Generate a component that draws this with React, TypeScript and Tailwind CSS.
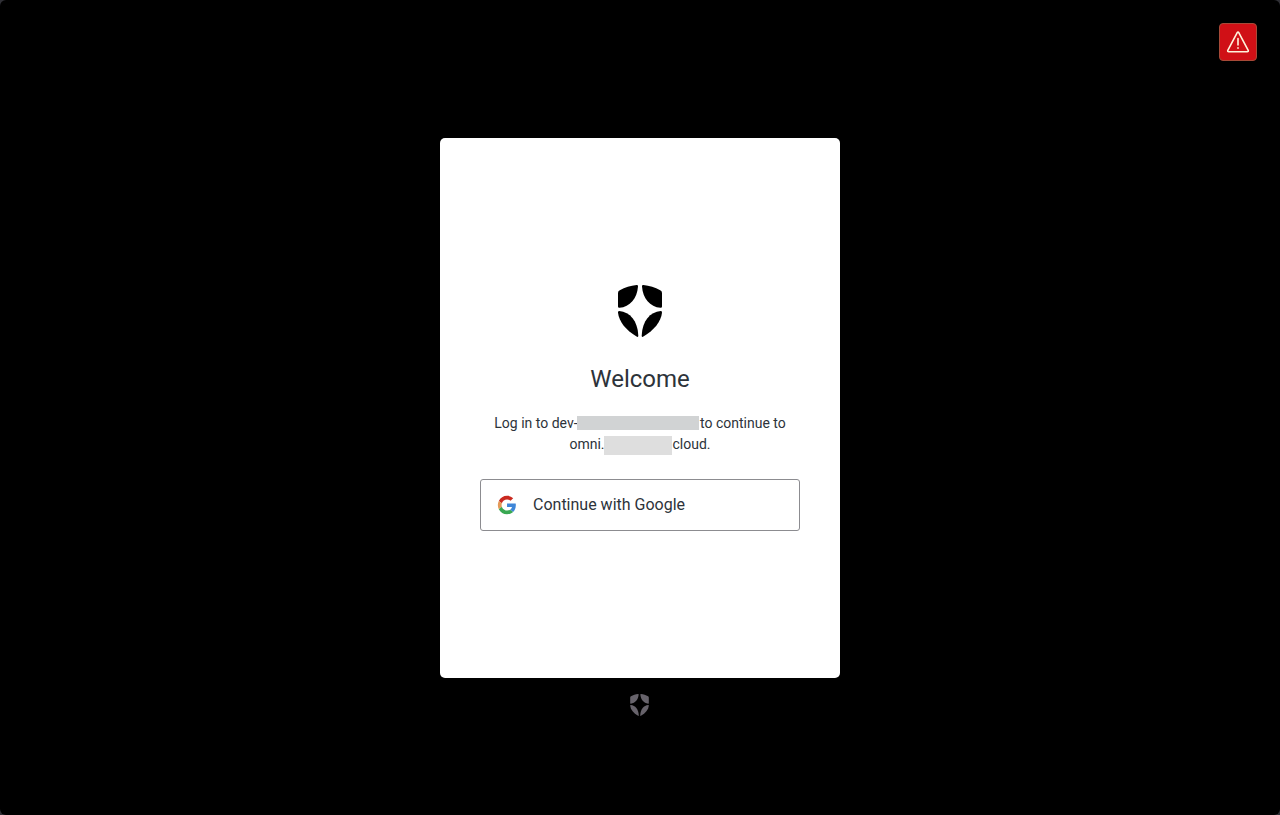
function Shield({ className, label }: { className: string; label: string }) {
  return (
    <svg viewBox="0 0 44 52" className={className} fill="currentColor" role="img" aria-label={label}>
      <ShieldHalf />
      <g transform="translate(44 0) scale(-1 1)">
        <ShieldHalf />
      </g>
    </svg>
  );
}

function ShieldHalf() {
  return (
    <>
      <path d="M18.6 0Q20.1-.1 20 1.4C19.2 13 12 22 1.5 22.8Q0 23 0 21.400V8Q0 6 1.8 5.2C7 2.500 12.500.6 18.600 0Z" />
      <path d="M1.3 26C12 27 19.700 36 20.300 50.400Q20.300 52.600 18.600 51.600C8 45 1 37 0 27.500Q-.1 26 1.3 26Z" />
    </>
  );
}

function GoogleLogo() {
  return (
    <svg viewBox="0 0 48 48" className="size-5 shrink-0" aria-hidden="true">
      <g transform="translate(2 2) scale(.92)">
        <path fill="#ca2a20" d="M24 9.500c3.540 0 6.710 1.220 9.210 3.600l6.850-6.850C35.900 2.380 30.470 0 24 0 14.620 0 6.510 5.380 2.560 13.220l7.980 6.190C12.430 13.720 17.740 9.500 24 9.500z" />
        <path fill="#3f86d8" d="M46.980 24.550c0-1.570-.15-3.090-.38-4.550H24v9.020h12.940c-.58 2.960-2.260 5.480-4.780 7.180l7.730 6c4.510-4.180 7.090-10.360 7.090-17.650z" />
        <path fill="#e49a58" d="M10.530 28.590c-.48-1.450-.76-2.990-.76-4.590s.27-3.140.76-4.590l-7.980-6.190C.92 16.460 0 20.120 0 24c0 3.880.92 7.540 2.560 10.780l7.970-6.190z" />
        <path fill="#39a852" d="M24 48c6.480 0 11.930-2.130 15.890-5.810l-7.730-6c-2.150 1.450-4.920 2.300-8.160 2.300-6.260 0-11.570-4.220-13.470-9.910l-7.980 6.190C6.510 42.620 14.620 48 24 48z" />
      </g>
    </svg>
  );
}

export default function App() {
  return (
    <div className="min-h-screen bg-[#303036] font-['Roboto',sans-serif] text-[#2d333a]">
      <div className="relative grid min-h-screen grid-rows-[1fr_auto_1fr] justify-items-center rounded-md bg-black">
        <button
          type="button"
          aria-label="Show warning"
          className="absolute top-[23px] right-[23px] flex size-[38px] items-center justify-center rounded-sm border border-[#a64a38] bg-[#d01016] text-[#fff3dc]"
        >
          <svg viewBox="0 0 24 24" className="size-6" fill="none" stroke="currentColor" strokeWidth="1.6" strokeLinejoin="round" strokeLinecap="round" aria-hidden="true">
            <path d="M11.1 2.800Q12 1.500 12.900 2.800L22.200 20.300Q22.700 21.700 21.200 21.800H2.800Q1.300 21.700 1.800 20.300Z" />
            <path d="M12 8.500v6.500M12 17.700v.6" />
          </svg>
        </button>

        <main className="row-start-2 flex min-h-[540px] w-full max-w-[400px] flex-col items-center justify-center rounded-[5px] bg-white px-10 pt-px text-center">
          <Shield className="h-[52px] w-11 text-black" label="Auth0" />
          <h1 className="mt-6 text-2xl leading-9 font-normal">Welcome</h1>
          <p className="mt-4 text-sm leading-[21px]">
            Log in to dev-
            <span className="-mr-0.5 -ml-px inline-block h-3.5 w-[122px] bg-[#d1d3d4] align-[-2px]" />
            {' '}to continue to
            <br />
            omni.
            <span className="mr-px -mb-px -ml-px inline-block h-[19px] w-[68px] bg-[#dedede] align-[-5px]" />
            cloud.
          </p>
          <button type="button" className="mt-6 flex h-[52px] w-full items-center gap-4 rounded-[3px] border border-[#8c8c90] px-4 text-base">
            <GoogleLogo />
            <span>Continue with Google</span>
          </button>
        </main>

        <footer className="row-start-3 pt-4 pr-px">
          <Shield className="h-[22px] w-[19px] text-[#67636b]" label="Auth0" />
        </footer>
      </div>
    </div>
  );
}
